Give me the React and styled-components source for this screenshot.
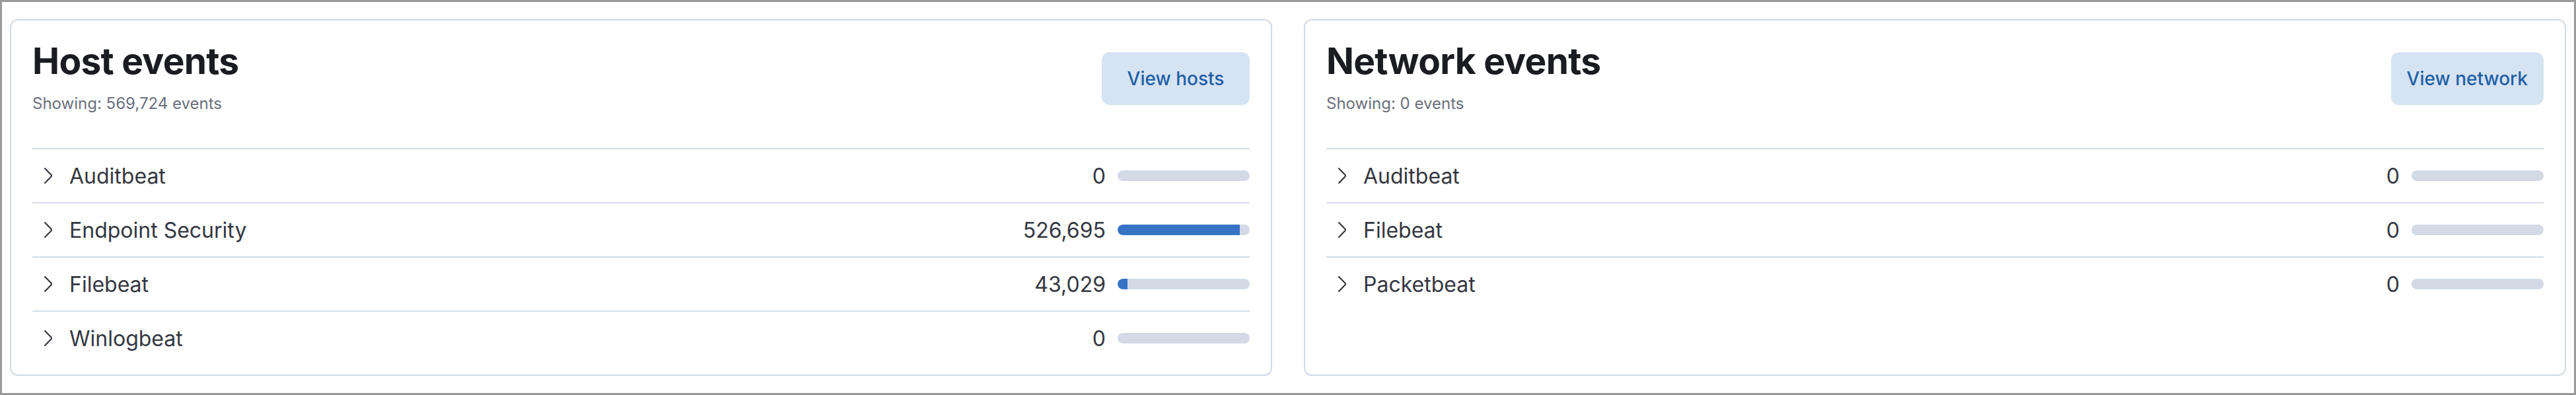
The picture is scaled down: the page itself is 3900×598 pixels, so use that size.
import React from "react";
import styled, { createGlobalStyle } from "styled-components";

const GlobalStyle = createGlobalStyle`
  html, body { margin: 0; padding: 0; background: #ffffff; }
  body { font-family: Inter, "Noto Sans", sans-serif; }
  * { box-sizing: border-box; }
`;

const Frame = styled.div`
  width: 3900px;
  height: 598px;
  border: 3px solid #999999;
  background: #ffffff;
  padding: 26px 12px;
  display: flex;
  gap: 48px;
`;

const Card = styled.section`
  flex: 1 1 0;
  min-width: 0;
  border: 2px solid #d3dae6;
  border-radius: 12px;
  padding: 32px 32px 15px;
  display: flex;
  flex-direction: column;
`;

const Header = styled.header`
  display: flex;
  align-items: center;
  justify-content: space-between;
`;

const Heading = styled.div`
  display: flex;
  flex-direction: column;
`;

const Title = styled.h2`
  margin: 0;
  font-family: Inter, sans-serif;
  font-size: 55px;
  line-height: 58px;
  font-weight: 700;
  letter-spacing: -0.7px;
  color: #1a1c21;
`;

const Subtitle = styled.div`
  margin-top: 18px;
  font-size: 24px;
  line-height: 36px;
  color: #69707d;
`;

const ViewButton = styled.button`
  height: 80px;
  min-width: 224px;
  padding: 0 24px;
  border: none;
  border-radius: 12px;
  background: #d6e3f3;
  color: #1f5fa6;
  font-family: Inter, sans-serif;
  font-size: 28px;
  font-weight: 500;
  cursor: pointer;
`;

const List = styled.div`
  margin-top: 49px;
  display: flex;
  flex-direction: column;
`;

const Row = styled.div`
  height: 82px;
  border-top: 2px solid #d3dae6;
  display: flex;
  align-items: center;
  color: #343741;
  font-size: 32px;
`;

const Chevron = styled.svg`
  width: 32px;
  height: 32px;
  margin-left: 8px;
  margin-right: 16px;
  flex: none;
  fill: #343741;
`;

const Label = styled.span`
  flex: 1;
`;

const Count = styled.span`
  margin-right: 18px;
`;

const Track = styled.div`
  width: 200px;
  height: 16px;
  border-radius: 8px;
  background: #d3dae6;
  overflow: hidden;
`;

const Fill = styled.div`
  height: 100%;
  background: #3673c5;
  border-radius: 8px 0 0 8px;
`;

const ArrowRight = () => (
  <Chevron viewBox="0 0 16 16" aria-hidden="true">
    <path d="M5.157 13.069l4.611-4.685a.546.546 0 000-.768L5.158 2.93a.552.552 0 010-.771.53.53 0 01.759 0l4.61 4.684c.631.641.63 1.687 0 2.328l-4.61 4.685a.53.53 0 01-.76 0 .552.552 0 010-.771z" />
  </Chevron>
);

const fmt = (n) => n.toLocaleString("en-US");

const EventsPanel = ({ title, button, rows }) => {
  const total = rows.reduce((s, r) => s + r.count, 0);
  return (
    <Card>
      <Header>
        <Heading>
          <Title>{title}</Title>
          <Subtitle>Showing: {fmt(total)} events</Subtitle>
        </Heading>
        <ViewButton>{button}</ViewButton>
      </Header>
      <List>
        {rows.map((r) => (
          <Row key={r.name}>
            <ArrowRight />
            <Label>{r.name}</Label>
            <Count>{fmt(r.count)}</Count>
            <Track>
              <Fill style={{ width: `${total ? (r.count / total) * 100 : 0}%` }} />
            </Track>
          </Row>
        ))}
      </List>
    </Card>
  );
};

export default function App() {
  return (
    <>
      <GlobalStyle />
      <Frame>
        <EventsPanel
          title="Host events"
          button="View hosts"
          rows={[
            { name: "Auditbeat", count: 0 },
            { name: "Endpoint Security", count: 526695 },
            { name: "Filebeat", count: 43029 },
            { name: "Winlogbeat", count: 0 },
          ]}
        />
        <EventsPanel
          title="Network events"
          button="View network"
          rows={[
            { name: "Auditbeat", count: 0 },
            { name: "Filebeat", count: 0 },
            { name: "Packetbeat", count: 0 },
          ]}
        />
      </Frame>
    </>
  );
}
